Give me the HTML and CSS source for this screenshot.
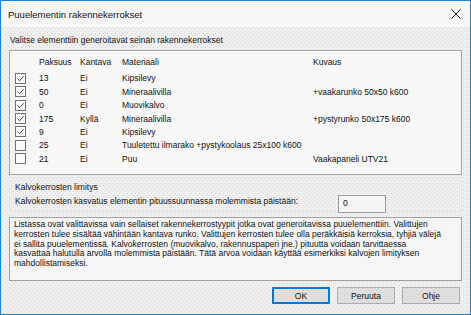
FILE: index.html
```html
<!DOCTYPE html>
<html lang="fi">
<head>
    <meta charset="UTF-8">
    <meta name="viewport" content="width=device-width, initial-scale=1.0">
    <title>Puuelementin rakennekerrokset</title>
    <link rel="stylesheet" href="styles.css">
</head>
<body>
    <div class="window">
        <div class="titlebar">
            <span class="title">Puuelementin rakennekerrokset</span>
            <svg class="close" width="10" height="10" viewBox="0 0 10 10">
                <path d="M0.5 0.5 L9.5 9.5 M9.5 0.5 L0.5 9.5" stroke="#222" stroke-width="1" fill="none"/>
            </svg>
        </div>

        <div class="client dots">
            <div class="caption">Valitse elementtiin generoitavat seinän rakennekerrokset</div>

            <div class="list">
                <div class="row head">
                    <span></span>
                    <span>Paksuus</span>
                    <span>Kantava</span>
                    <span>Materiaali</span>
                    <span>Kuvaus</span>
                </div>
                <div class="row">
                    <span class="check on"><svg viewBox="0 0 10 10"><path d="M2 5 L4 7.5 L8.5 2.5" stroke="#333" stroke-width="1" fill="none"/></svg></span>
                    <span>13</span><span>Ei</span><span>Kipsilevy</span><span></span>
                </div>
                <div class="row">
                    <span class="check on"><svg viewBox="0 0 10 10"><path d="M2 5 L4 7.5 L8.5 2.5" stroke="#333" stroke-width="1" fill="none"/></svg></span>
                    <span>50</span><span>Ei</span><span>Mineraalivilla</span><span>+vaakarunko 50x50 k600</span>
                </div>
                <div class="row">
                    <span class="check on"><svg viewBox="0 0 10 10"><path d="M2 5 L4 7.5 L8.5 2.5" stroke="#333" stroke-width="1" fill="none"/></svg></span>
                    <span>0</span><span>Ei</span><span>Muovikalvo</span><span></span>
                </div>
                <div class="row">
                    <span class="check on"><svg viewBox="0 0 10 10"><path d="M2 5 L4 7.5 L8.5 2.5" stroke="#333" stroke-width="1" fill="none"/></svg></span>
                    <span>175</span><span>Kyllä</span><span>Mineraalivilla</span><span>+pystyrunko 50x175 k600</span>
                </div>
                <div class="row">
                    <span class="check on"><svg viewBox="0 0 10 10"><path d="M2 5 L4 7.5 L8.5 2.5" stroke="#333" stroke-width="1" fill="none"/></svg></span>
                    <span>9</span><span>Ei</span><span>Kipsilevy</span><span></span>
                </div>
                <div class="row">
                    <span class="check"></span>
                    <span>25</span><span>Ei</span><span class="wide">Tuuletettu ilmarako +pystykoolaus 25x100 k600</span>
                </div>
                <div class="row">
                    <span class="check"></span>
                    <span>21</span><span>Ei</span><span>Puu</span><span>Vaakapaneli UTV21</span>
                </div>
            </div>

            <div class="group">
                <div class="group-title">Kalvokerrosten limitys</div>
                <div class="group-line">
                    <span>Kalvokerrosten kasvatus elementin pituussuunnassa molemmista päistään:</span>
                    <span class="field">0</span>
                </div>
            </div>

            <div class="info">Listassa ovat valittavissa vain sellaiset rakennekerrostyypit jotka ovat generoitavissa puuelementtiin. Valittujen<br>kerrosten tulee sisältää vähintään kantava runko. Valittujen kerrosten tulee olla peräkkäisiä kerroksia, tyhjiä välejä<br>ei sallita puuelementissä. Kalvokerrosten (muovikalvo, rakennuspaperi jne.) pituutta voidaan tarvittaessa<br>kasvattaa halutulla arvolla molemmista päistään. Tätä arvoa voidaan käyttää esimerkiksi kalvojen limityksen<br>mahdollistamiseksi.</div>

            <div class="buttons">
                <button class="default">OK</button>
                <button>Peruuta</button>
                <button>Ohje</button>
            </div>
        </div>
    </div>
</body>
</html>
```

FILE: styles.css
```css
body {
    margin: 0;
    font-family: "Liberation Sans", Arial, sans-serif;
    font-size: 8.5px;
    color: #111;
    background-color: #fff;
}

.window {
    width: 471px;
    height: 315px;
    box-sizing: border-box;
    border: 1px solid #1883d7;
    display: flex;
    flex-direction: column;
    background-color: #f4f4f4;
}

.titlebar {
    height: 26px;
    display: flex;
    align-items: center;
    justify-content: space-between;
    padding: 0 9px 0 7px;
    background-color: #f7f7f7;
    font-size: 9.5px;
}

.close {
    width: 10px;
    height: 10px;
}

.dots {
    background-color: #f1f1f1;
    background-image:
        conic-gradient(from 270deg at 1px 1px, #d4d4d4 0 90deg, transparent 0),
        conic-gradient(from 270deg at 1px 1px, #d4d4d4 0 90deg, transparent 0);
    background-size: 4px 4px;
    background-position: 0 0, 2px 2px;
}

.client {
    flex: 1;
    display: flex;
    flex-direction: column;
    padding: 0 8px 0 8px;
}

.caption {
    margin-top: 7px;
    line-height: 12px;
    padding-left: 1px;
}

.list {
    margin-top: 4px;
    height: 125px;
    box-sizing: border-box;
    border: 1px solid #a6a6a6;
    background-color: #f8f8f8;
    padding: 5px 0 0 5px;
}

.row {
    display: grid;
    grid-template-columns: 24px 41px 42px 191px 1fr;
    align-items: center;
    height: 13.45px;
    white-space: nowrap;
}

.row.head {
    height: 12px;
    margin-bottom: 3.5px;
}

.row .wide {
    grid-column: 4 / 6;
}

.check {
    width: 11px;
    height: 11px;
    box-sizing: border-box;
    border: 1px solid #6f6f6f;
    background-color: #fbfbfb;
    display: flex;
}

.check svg {
    width: 9px;
    height: 9px;
}

.group {
    margin-top: 2px;
    height: 35px;
    box-sizing: border-box;
    border: 1px solid #e4e4e4;
    padding: 2px 0 0 5px;
}

.group-title {
    line-height: 12px;
    margin-top: 1px;
}

.group-line {
    display: flex;
    align-items: center;
    height: 16px;
}

.field {
    margin-left: auto;
    margin-right: 75px;
    width: 48px;
    height: 18px;
    box-sizing: border-box;
    border: 1px solid #9c9c9c;
    background-color: #f5f5f5;
    padding: 2px 0 0 4px;
    align-self: flex-end;
    margin-bottom: -4px;
}

.info {
    margin-top: 5px;
    height: 64px;
    box-sizing: border-box;
    border: 1px solid #a0a0a0;
    background-color: #f6f6f6;
    padding: 2px 4px 0 4px;
    line-height: 9.75px;
    white-space: nowrap;
}

.buttons {
    display: flex;
    justify-content: flex-end;
    gap: 7px;
    margin-top: 6px;
    padding-right: 2px;
}

button {
    width: 58px;
    height: 17px;
    padding: 0;
    font-family: inherit;
    font-size: 8.5px;
    color: #111;
    border: 1px solid #adadad;
    background-color: #e1e1e1;
    background-image:
        conic-gradient(from 270deg at 1px 1px, #cbcbcb 0 90deg, transparent 0),
        conic-gradient(from 270deg at 1px 1px, #cbcbcb 0 90deg, transparent 0);
    background-size: 4px 4px;
    background-position: 0 0, 2px 2px;
}

button.default {
    border: 1px solid #0078d7;
    box-shadow: inset 0 0 0 1px #0078d7;
}
```
